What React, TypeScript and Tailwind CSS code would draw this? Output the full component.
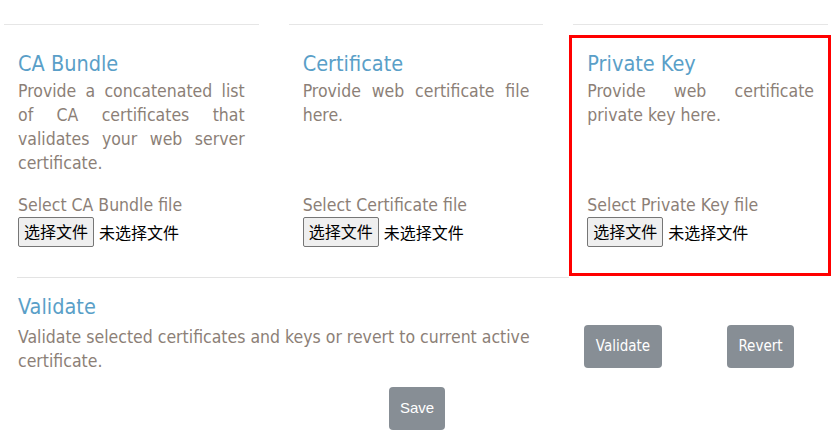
import React from 'react';

interface CertColumnProps {
  title: string;
  description: string;
  label: string;
}

const FakeFileInput: React.FC = () => {
  return (
    <div className="flex items-center font-['Noto_Sans_CJK_SC',sans-serif] text-[16px] text-black">
      <span className="h-[30px] leading-[26px] px-[5px] bg-[#efefef] border border-[#767676] rounded-[2px]">
        选择文件
      </span>
      <span className="ml-[5px] leading-[26px]">未选择文件</span>
    </div>
  );
};

const CertColumn: React.FC<CertColumnProps> = ({ title, description, label }) => {
  return (
    <div className="flex flex-col border-t border-[#e6e6e6] px-[14px] pt-[27px] pb-[30px]">
      <h3 className="text-[21.5px] leading-[24px] text-[#5a9fc8] mb-[3px]">{title}</h3>
      <p className="flex-1 text-justify text-[17.5px] leading-[24px] text-[#8c7f77]">{description}</p>
      <div className="mt-[18px] text-[17.5px] leading-[24px] text-[#8c7f77]">{label}</div>
      <FakeFileInput />
    </div>
  );
};

export default function App() {
  return (
    <div className="relative w-[834px] h-[445px] bg-white overflow-hidden font-['DejaVu_Sans_Condensed','DejaVu_Sans',sans-serif]">
      <div className="pt-[24px] pl-[4px] pr-[6px] grid grid-cols-3 gap-[30px]">
        <CertColumn
          title="CA Bundle"
          description="Provide a concatenated list of CA certificates that validates your web server certificate."
          label="Select CA Bundle file"
        />
        <CertColumn
          title="Certificate"
          description="Provide web certificate file here."
          label="Select Certificate file"
        />
        <CertColumn
          title="Private Key"
          description="Provide web certificate private key here."
          label="Select Private Key file"
        />
      </div>

      <div className="ml-[17px] w-[552px] border-t border-[#e3e3e3]" />

      <div className="pt-[17px]">
        <h3 className="pl-[18px] text-[21.5px] leading-[24px] text-[#5a9fc8] mb-[6px]">Validate</h3>
        <div className="flex items-start">
          <p className="pl-[18px] w-[540px] text-[17.5px] leading-[24px] text-[#8c7f77]">
            Validate selected certificates and keys or revert to current active certificate.
          </p>
          <button className="ml-[44px] h-[43px] w-[78px] rounded-[4px] bg-[#878e95] text-white text-[15px]">
            Validate
          </button>
          <button className="ml-[65px] h-[43px] w-[67px] rounded-[4px] bg-[#878e95] text-white text-[15px]">
            Revert
          </button>
        </div>
        <div className="flex justify-center mt-[14px]">
          <button className="h-[43px] w-[56px] rounded-[4px] bg-[#878e95] text-white text-[15px] font-['Liberation_Sans',sans-serif]">
            Save
          </button>
        </div>
      </div>

      <div className="absolute left-[569px] top-[35px] w-[262px] h-[241px] border-[3px] border-[#ff0000]" />
    </div>
  );
}
